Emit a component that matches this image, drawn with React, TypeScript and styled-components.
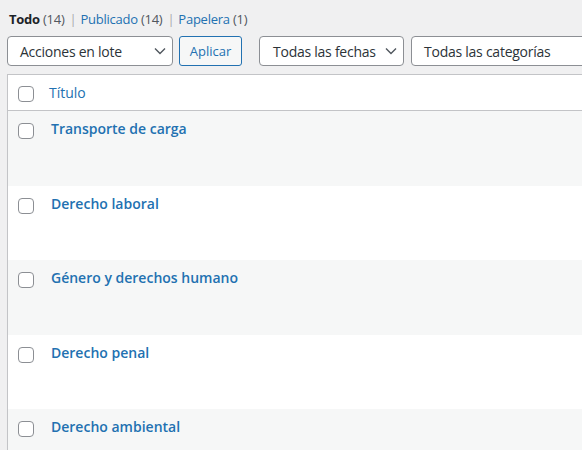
import React from "react";
import styled, { createGlobalStyle } from "styled-components";

const Global = createGlobalStyle`
  html, body { margin: 0; padding: 0; }
  body {
    background: #f0f0f1;
    font-family: "Open Sans", "Noto Sans", sans-serif;
    color: #3c434a;
    overflow: hidden;
    width: 582px;
    height: 450px;
  }
`;

const Page = styled.div`
  padding-left: 7px;
  width: 900px;
`;

const SubSub = styled.ul`
  list-style: none;
  margin: 0;
  padding: 9px 0 0 2px;
  display: flex;
  font-size: 13px;
  line-height: 20px;
  height: 20px;
  color: #50575e;
  letter-spacing: -0.25px;
`;

const SubItem = styled.li`
  white-space: pre;
`;

const SubLink = styled.span<{ $current?: boolean }>`
  color: ${(p) => (p.$current ? "#1d2327" : "#2271b1")};
  font-weight: ${(p) => (p.$current ? 700 : 400)};
`;

const Count = styled.span`
  color: #50575e;
`;

const Sep = styled.span`
  color: #a7aaad;
  margin: 0 4px 0 5px;
`;

const TableNav = styled.div`
  display: flex;
  align-items: center;
  margin-top: 7px;
  height: 30px;
`;

const Select = styled.div<{ $width: number; $gap?: number; $pl?: number }>`
  box-sizing: border-box;
  width: ${(p) => p.$width}px;
  height: 30px;
  margin-right: ${(p) => p.$gap ?? 0}px;
  border: 1px solid #8c8f94;
  border-radius: 4px;
  background: #fff;
  display: flex;
  align-items: center;
  justify-content: space-between;
  padding: 0 6px 0 ${(p) => p.$pl ?? 12}px;
  font-size: 14px;
  letter-spacing: -0.25px;
  color: #2c3338;
  flex-shrink: 0;
  white-space: nowrap;
`;

const Chevron = () => (
  <svg width="12" height="8" viewBox="0 0 12 8" fill="none">
    <path d="M1 1.5 L6 6.5 L11 1.5" stroke="#50575e" strokeWidth="1.4" />
  </svg>
);

const Button = styled.div`
  box-sizing: border-box;
  height: 30px;
  width: 63px;
  margin-right: 17px;
  border: 1px solid #2271b1;
  border-radius: 3px;
  background: #f6f7f7;
  color: #2271b1;
  font-size: 13px;
  display: flex;
  align-items: center;
  justify-content: center;
  flex-shrink: 0;
`;

const Table = styled.div`
  margin-top: 8px;
  border: 1px solid #c3c4c7;
  border-right: none;
  background: #fff;
  box-shadow: 0 1px 1px rgba(0, 0, 0, 0.04);
`;

const HeadRow = styled.div`
  display: flex;
  height: 35px;
  border-bottom: 1px solid #c3c4c7;
`;

const Row = styled.div<{ $alt?: boolean }>`
  display: flex;
  height: 74.5px;
  background: ${(p) => (p.$alt ? "#f6f7f7" : "#fff")};
`;

const CheckCell = styled.div<{ $top: number }>`
  width: 41px;
  padding: ${(p) => p.$top}px 0 0 10px;
  box-sizing: border-box;
  flex-shrink: 0;
`;

const Box = styled.span`
  display: block;
  width: 16px;
  height: 16px;
  box-sizing: border-box;
  border: 1px solid #8c8f94;
  border-radius: 4px;
  background: #fff;
`;

const HeadTitle = styled.div`
  padding-top: 8px;
  font-size: 14px;
  line-height: 20px;
  color: #2271b1;
`;

const RowTitle = styled.div`
  padding: 8px 0 0 2px;
  font-size: 14px;
  line-height: 20px;
  font-weight: 600;
  color: #2271b1;
`;

const posts = [
  "Transporte de carga",
  "Derecho laboral",
  "Género y derechos humano",
  "Derecho penal",
  "Derecho ambiental",
];

export default function App() {
  return (
    <Page>
      <Global />
      <SubSub>
        <SubItem>
          <SubLink $current>Todo</SubLink> <Count>(14)</Count>
          <Sep>|</Sep>
        </SubItem>
        <SubItem>
          <SubLink>Publicado</SubLink> <Count>(14)</Count>
          <Sep>|</Sep>
        </SubItem>
        <SubItem>
          <SubLink>Papelera</SubLink> <Count>(1)</Count>
        </SubItem>
      </SubSub>
      <TableNav>
        <Select $width={166} $gap={6}>
          <span>Acciones en lote</span>
          <Chevron />
        </Select>
        <Button>Aplicar</Button>
        <Select $width={145} $gap={7} $pl={13}>
          <span>Todas las fechas</span>
          <Chevron />
        </Select>
        <Select $width={200} $pl={12}>
          <span>Todas las categorías</span>
        </Select>
      </TableNav>
      <Table>
        <HeadRow>
          <CheckCell $top={11}>
            <Box />
          </CheckCell>
          <HeadTitle>Título</HeadTitle>
        </HeadRow>
        {posts.map((t, i) => (
          <Row key={t} $alt={i % 2 === 0}>
            <CheckCell $top={12}>
              <Box />
            </CheckCell>
            <RowTitle>{t}</RowTitle>
          </Row>
        ))}
      </Table>
    </Page>
  );
}
